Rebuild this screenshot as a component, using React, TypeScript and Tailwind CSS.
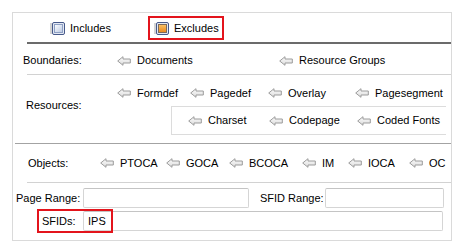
import React from "react";

type Item = { label: string; w?: number };

function Arrow() {
  return (
    <svg width="14" height="10" viewBox="0 0 14 10" className="shrink-0">
      <defs>
        <linearGradient id="arrowFill" x1="0" y1="0" x2="0" y2="1">
          <stop offset="0" stopColor="#fbfbfb" />
          <stop offset="1" stopColor="#dcdcdc" />
        </linearGradient>
      </defs>
      <polygon
        points="0.7,5 6,0.7 6,3 13.3,3 13.3,7 6,7 6,9.3"
        fill="url(#arrowFill)"
        stroke="#9c9c9c"
        strokeWidth="1"
        strokeLinejoin="round"
      />
    </svg>
  );
}

function CheckIcon({ on }: { on?: boolean }) {
  return (
    <svg width="15" height="13" viewBox="0 0 15 13" className="shrink-0">
      <defs>
        <linearGradient id="boxBlue" x1="0" y1="0" x2="1" y2="1">
          <stop offset="0" stopColor="#ffffff" />
          <stop offset="1" stopColor="#b9c7e2" />
        </linearGradient>
        <linearGradient id="boxOrange" x1="0" y1="0" x2="0" y2="1">
          <stop offset="0" stopColor="#fbc468" />
          <stop offset="1" stopColor="#e9861a" />
        </linearGradient>
      </defs>
      <rect x="0" y="1" width="2" height="11" fill="#d4d4d4" />
      <rect x="2.5" y="0.5" width="12" height="12" rx="1.5" fill="#e3e8f2" stroke="#46598a" />
      <rect
        x="4.5"
        y="2.5"
        width="8"
        height="8"
        fill={on ? "url(#boxOrange)" : "url(#boxBlue)"}
        stroke={on ? "#7d6a5a" : "#8ea0c4"}
      />
    </svg>
  );
}

function Link({ label, w }: Item) {
  return (
    <div className="flex items-center gap-[6px] shrink-0" style={w ? { width: w } : undefined}>
      <Arrow />
      <span className="whitespace-nowrap">{label}</span>
    </div>
  );
}

const resRow1: Item[] = [
  { label: "Formdef", w: 73 },
  { label: "Pagedef", w: 78 },
  { label: "Overlay", w: 87 },
  { label: "Pagesegment" },
];

const resRow2: Item[] = [
  { label: "Charset", w: 81 },
  { label: "Codepage", w: 88 },
  { label: "Coded Fonts" },
];

const objects: Item[] = [
  { label: "PTOCA", w: 66 },
  { label: "GOCA", w: 63 },
  { label: "BCOCA", w: 73 },
  { label: "IM", w: 46 },
  { label: "IOCA", w: 61 },
  { label: "OC" },
];

export default function App() {
  return (
    <div className="w-[464px] h-[251px] bg-white text-black text-[11px] leading-none font-['Liberation_Sans',Arial,sans-serif] pt-[12px] pl-[12px]">
      <div className="w-[440px] h-[229px] border border-[#dadada] flex flex-col">
        {/* tabs */}
        <div className="h-[29px] flex items-center pt-[1px] pl-[37px]">
          <div className="w-[98px] flex items-center gap-[5px]">
            <CheckIcon />
            <span>Includes</span>
          </div>
          <div className="h-[24px] flex items-center gap-[5px] border-2 border-[#e3141c] pl-[4px] pr-[3px]">
            <CheckIcon on />
            <span>Excludes</span>
          </div>
        </div>
        <div className="ml-[14px] h-[2px] bg-[#6b6b6b]" />

        {/* boundaries */}
        <div className="h-[30px] flex items-center pt-[3px]">
          <div className="w-[104px] pl-[10px]">Boundaries:</div>
          <Link label="Documents" w={162} />
          <Link label="Resource Groups" />
        </div>
        <div className="ml-[14px] h-px bg-[#d2d2d2]" />

        {/* resources */}
        <div className="h-[68px] flex">
          <div className="w-[104px] pl-[13px] mt-[25px]">Resources:</div>
          <div className="flex flex-col">
            <div className="h-[31px] flex items-center pt-[5px]">
              {resRow1.map((it) => (
                <Link key={it.label} {...it} />
              ))}
            </div>
            <div className="ml-[54px] w-[275px] h-[29px] border-l border-t border-b border-[#dcdcdc] flex items-center pl-[16px]">
              {resRow2.map((it) => (
                <Link key={it.label} {...it} />
              ))}
            </div>
          </div>
        </div>
        <div className="ml-[2px] h-px bg-[#a3a3a3]" />

        {/* objects */}
        <div className="h-[38px] flex items-center">
          <div className="w-[87px] pl-[15px]">Objects:</div>
          {objects.map((it) => (
            <Link key={it.label} {...it} />
          ))}
        </div>
        <div className="ml-[14px] h-px bg-[#d2d2d2]" />

        {/* page range */}
        <div className="h-[26px] flex items-center pt-[4px]">
          <div className="w-[70px] pl-[3px]">Page Range:</div>
          <div className="w-[166px] h-[20px] border border-[#d5d5d5] border-t-[#c4c4c4] rounded-[2px] bg-white" />
          <div className="ml-[11px] w-[65px]">SFID Range:</div>
          <div className="w-[119px] h-[20px] border border-[#d5d5d5] border-t-[#c4c4c4] rounded-[2px] bg-white" />
        </div>

        {/* sfids */}
        <div className="relative h-[24px] flex items-center">
          <div className="w-[70px] pl-[29px]">SFIDs:</div>
          <div className="w-[360px] h-[20px] border border-[#d5d5d5] border-t-[#c4c4c4] rounded-[2px] bg-white flex items-center pl-[4px]">
            IPS
          </div>
          <div className="absolute left-[24px] top-0 w-[76px] h-[24px] border-2 border-[#e3141c]" />
        </div>
      </div>
    </div>
  );
}
